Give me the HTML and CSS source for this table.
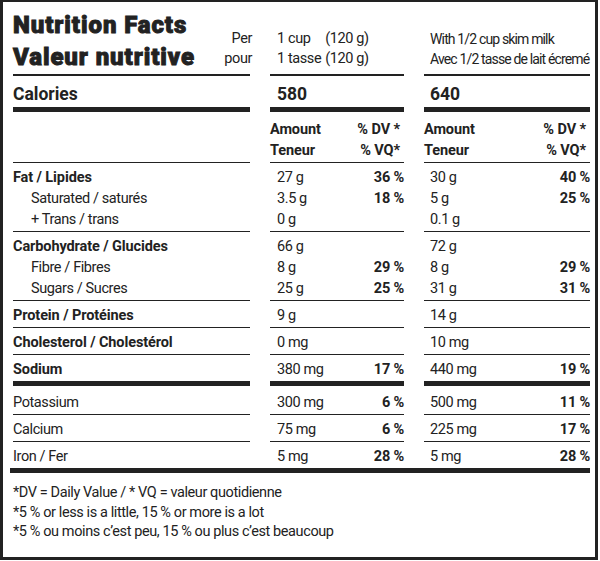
FILE: index.html
```html
<!DOCTYPE html>
<html lang="en">
<head>
<meta charset="utf-8">
<title>Nutrition Facts</title>
<link rel="stylesheet" href="styles.css">
</head>
<body>
<div class="label">
  <div class="row head">
    <div class="cell title-cell">
      <h1 class="title">Nutrition Facts<br>Valeur nutritive</h1>
      <div class="per">Per<br>pour</div>
    </div>
    <div class="cell c1">
      <div class="serv-grid"><span>1 cup</span><span>(120 g)</span><span>1 tasse</span><span>(120 g)</span></div>
    </div>
    <div class="cell c2 serv2">
      <div>With 1/2 cup skim milk</div>
      <div>Avec 1/2 tasse de lait écremé</div>
    </div>
  </div>

  <div class="row cal">
    <div class="cell">Calories</div>
    <div class="cell c1">580</div>
    <div class="cell c2">640</div>
  </div>

  <div class="row hdr">
    <div class="cell"></div>
    <div class="cell c1">
      <div class="line"><span>Amount</span><span class="dv">% DV *</span></div>
      <div class="line"><span>Teneur</span><span class="dv">% VQ*</span></div>
    </div>
    <div class="cell c2">
      <div class="line"><span>Amount</span><span class="dv">% DV *</span></div>
      <div class="line"><span>Teneur</span><span class="dv">% VQ*</span></div>
    </div>
  </div>

  <div class="row">
    <div class="cell">
      <div class="main">Fat / Lipides</div>
      <div class="sub">Saturated / saturés</div>
      <div class="sub">+ Trans / trans</div>
    </div>
    <div class="cell c1">
      <div class="line"><span>27 g</span><span class="pct">36 %</span></div>
      <div class="line"><span>3.5 g</span><span class="pct">18 %</span></div>
      <div class="line"><span>0 g</span></div>
    </div>
    <div class="cell c2">
      <div class="line"><span>30 g</span><span class="pct">40 %</span></div>
      <div class="line"><span>5 g</span><span class="pct">25 %</span></div>
      <div class="line"><span>0.1 g</span></div>
    </div>
  </div>

  <div class="row">
    <div class="cell">
      <div class="main">Carbohydrate / Glucides</div>
      <div class="sub">Fibre / Fibres</div>
      <div class="sub">Sugars / Sucres</div>
    </div>
    <div class="cell c1">
      <div class="line"><span>66 g</span></div>
      <div class="line"><span>8 g</span><span class="pct">29 %</span></div>
      <div class="line"><span>25 g</span><span class="pct">25 %</span></div>
    </div>
    <div class="cell c2">
      <div class="line"><span>72 g</span></div>
      <div class="line"><span>8 g</span><span class="pct">29 %</span></div>
      <div class="line"><span>31 g</span><span class="pct">31 %</span></div>
    </div>
  </div>

  <div class="row">
    <div class="cell main">Protein / Protéines</div>
    <div class="cell c1"><div class="line"><span>9 g</span></div></div>
    <div class="cell c2"><div class="line"><span>14 g</span></div></div>
  </div>

  <div class="row">
    <div class="cell main">Cholesterol / Cholestérol</div>
    <div class="cell c1"><div class="line"><span>0 mg</span></div></div>
    <div class="cell c2"><div class="line"><span>10 mg</span></div></div>
  </div>

  <div class="row thick">
    <div class="cell main">Sodium</div>
    <div class="cell c1"><div class="line"><span>380 mg</span><span class="pct">17 %</span></div></div>
    <div class="cell c2"><div class="line"><span>440 mg</span><span class="pct">19 %</span></div></div>
  </div>

  <div class="row first-min">
    <div class="cell">Potassium</div>
    <div class="cell c1"><div class="line"><span>300 mg</span><span class="pct">6 %</span></div></div>
    <div class="cell c2"><div class="line"><span>500 mg</span><span class="pct">11 %</span></div></div>
  </div>

  <div class="row">
    <div class="cell">Calcium</div>
    <div class="cell c1"><div class="line"><span>75 mg</span><span class="pct">6 %</span></div></div>
    <div class="cell c2"><div class="line"><span>225 mg</span><span class="pct">17 %</span></div></div>
  </div>

  <div class="row last">
    <div class="cell">Iron / Fer</div>
    <div class="cell c1"><div class="line"><span>5 mg</span><span class="pct">28 %</span></div></div>
    <div class="cell c2"><div class="line"><span>5 mg</span><span class="pct">28 %</span></div></div>
  </div>

  <div class="bar"></div>

  <div class="foot">
    <p>*DV = Daily Value / * VQ = valeur quotidienne</p>
    <p>*5 % or less is a little, 15 % or more is a lot</p>
    <p>*5 % ou moins c’est peu, 15 % ou plus c’est beaucoup</p>
  </div>
</div>
</body>
</html>
```

FILE: styles.css
```css
* {
  box-sizing: border-box;
  margin: 0;
  padding: 0;
}

body {
  margin: 0;
  background: #fff;
  color: #222;
  font-family: Roboto, "Liberation Sans", sans-serif;
  font-size: 14.5px;
  letter-spacing: -0.4px;
}

.label {
  width: 598px;
  height: 560px;
  border: 3px solid #222;
  border-top-width: 2px;
  padding: 0 5px 0 10px;
}

.row {
  display: grid;
  grid-template-columns: 237px 134px 166px;
  column-gap: 20px;
}

.cell {
  border-bottom: 1px solid #222;
  padding: 4px 0 1px;
  line-height: 21px;
}

.c1 {
  padding-left: 7px;
}

.c2 {
  padding-left: 6px;
}

.line {
  display: flex;
  justify-content: space-between;
}

.pct {
  font-weight: 700;
  letter-spacing: -0.2px;
}

.main {
  font-weight: 700;
  letter-spacing: -0.1px;
}

.sub {
  padding-left: 18px;
}

/* header */
.head .cell {
  border-bottom-width: 2px;
  padding: 0 0 5px;
  display: flex;
  flex-direction: column;
  justify-content: flex-end;
  line-height: 20px;
}

.head .c1 {
  padding-left: 7px;
}

.head .c2 {
  padding-left: 6px;
}

.head .serv2 {
  white-space: nowrap;
  font-size: 14px;
  letter-spacing: -0.85px;
}

.head .title-cell {
  flex-direction: row;
  justify-content: space-between;
  align-items: flex-end;
  padding: 7px 0 1px;
}

.title {
  font-family: Roboto, Lato, "DejaVu Sans", sans-serif;
  font-weight: 900;
  font-size: 24px;
  line-height: 32px;
  letter-spacing: 0.9px;
  -webkit-text-stroke: 0.9px #222;
}

.per {
  text-align: right;
  line-height: 20px;
  margin: 0 -2px 4px 0;
}

.serv-grid {
  display: grid;
  grid-template-columns: auto auto;
  justify-content: start;
  column-gap: 4px;
}

/* calories */
.cal .cell {
  font-size: 17.5px;
  font-weight: 700;
  letter-spacing: 0;
  line-height: 24px;
  padding: 6px 0 1px;
  border-bottom: 5px solid #222;
}

.cal .c1 {
  padding-left: 7px;
}

.cal .c2 {
  padding-left: 6px;
}

/* amount header */
.hdr .cell {
  font-weight: 700;
  letter-spacing: -0.1px;
  padding: 7px 0 1px;
}

.hdr .dv {
  padding-right: 4px;
}

.thick .cell {
  border-bottom: 5px solid #222;
}

.first-min .cell {
  padding-top: 6px;
}

.last .cell {
  border-bottom: none;
}

.bar {
  height: 5px;
  background: #222;
  margin-left: -3px;
}

.foot {
  padding-top: 10px;
  line-height: 19.5px;
}
```
